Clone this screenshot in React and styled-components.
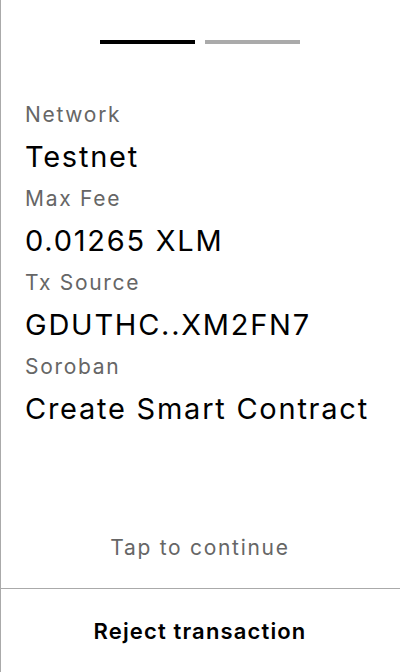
import React from 'react'
import styled, { createGlobalStyle } from 'styled-components'

const GlobalStyle = createGlobalStyle`
    html, body {
        margin: 0;
        padding: 0;
        background: #fff;
    }
    body {
        font-family: Inter, "Noto Sans", sans-serif;
    }
`

const details = [
    { label: 'Network', value: 'Testnet' },
    { label: 'Max Fee', value: '0.01265 XLM' },
    { label: 'Tx Source', value: 'GDUTHC..XM2FN7' },
    { label: 'Soroban', value: 'Create Smart Contract' },
]

function App() {
    return (
        <Container>
            <GlobalStyle />
            <Steps>
                <Step active />
                <Step />
            </Steps>
            <Details>
                {details.map((d) => (
                    <Field key={d.label}>
                        <Label>{d.label}</Label>
                        <Value>{d.value}</Value>
                    </Field>
                ))}
            </Details>
            <Hint>Tap to continue</Hint>
            <Footer>
                <RejectButton>Reject transaction</RejectButton>
            </Footer>
        </Container>
    )
}

export default App

const Container = styled.div`
    box-sizing: border-box;
    width: 400px;
    height: 672px;
    border-left: 1px solid #aaa;
    display: flex;
    flex-direction: column;
`
const Steps = styled.div`
    display: flex;
    justify-content: center;
    gap: 10px;
    padding: 40px 1px 0 0;
`
const Step = styled.div`
    width: 95px;
    height: 4px;
    background: ${(p) => (p.active ? '#000' : '#aaa')};
`
const Details = styled.div`
    padding: 51px 0 0 24px;
    flex: 1;
`
const Field = styled.div`
    display: flex;
    flex-direction: column;
`
const Label = styled.div`
    font-size: 21px;
    line-height: 40px;
    letter-spacing: 1.7px;
    color: #666;
`
const Value = styled.div`
    font-size: 29px;
    line-height: 44px;
    letter-spacing: 1.75px;
    color: #000;
`
const Hint = styled.div`
    text-align: center;
    font-size: 21px;
    line-height: 26px;
    letter-spacing: 1.7px;
    color: #666;
    padding: 0 1px 27px 0;
`
const Footer = styled.div`
    border-top: 1px solid #aaa;
    height: 83px;
    display: flex;
    align-items: center;
    justify-content: center;
    padding-right: 1px;
`
const RejectButton = styled.button`
    border: none;
    background: none;
    font-family: Inter, "Noto Sans", sans-serif;
    font-size: 22px;
    font-weight: 600;
    letter-spacing: 1.15px;
    color: #000;
    padding: 0;
`
